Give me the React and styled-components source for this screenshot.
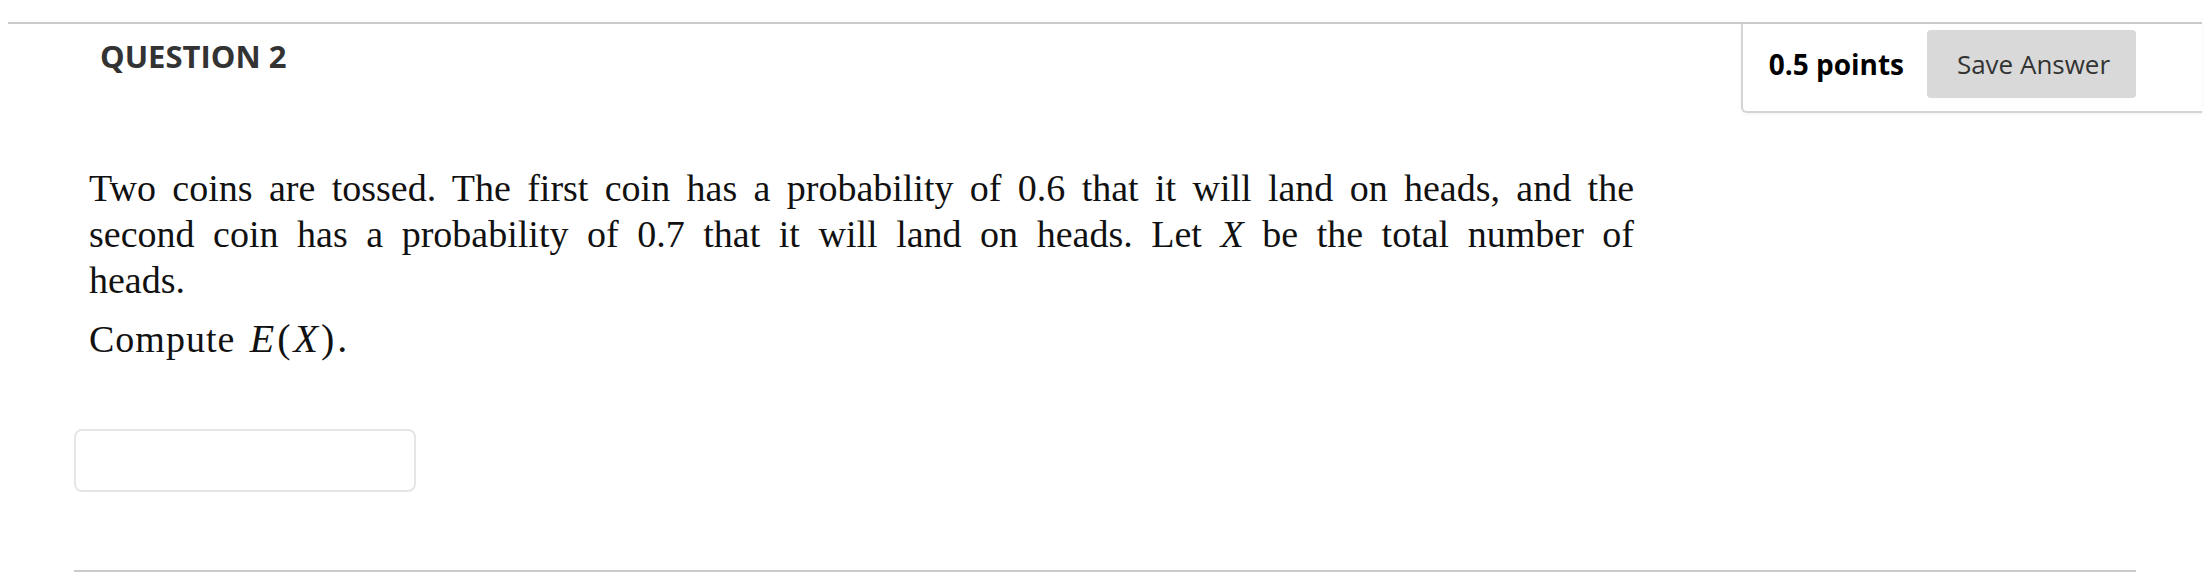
import React from "react";
import styled, { createGlobalStyle } from "styled-components";

const GlobalStyle = createGlobalStyle`
  html, body {
    margin: 0;
    padding: 0;
    background: #fff;
  }
  body {
    font-family: "Open Sans", "Liberation Sans", sans-serif;
  }
`;

const Page = styled.div`
  padding: 22px 8px 0;
`;

const QuestionBlock = styled.section`
  border-top: 2px solid #cbcbcb;
`;

const Header = styled.div`
  display: flex;
  justify-content: space-between;
  align-items: flex-start;
`;

const Heading = styled.h2`
  margin: 0;
  padding: 14px 0 0 92px;
  font-size: 31px;
  line-height: 1.2;
  font-weight: 700;
  color: #333;
`;

const PointsBox = styled.div`
  display: flex;
  align-items: center;
  gap: 23px;
  padding: 6px 66px 13px 26px;
  border-left: 2px solid #d4d4d4;
  border-bottom: 2px solid #d4d4d4;
  border-bottom-left-radius: 6px;
  box-shadow: 0 1px 3px rgba(0, 0, 0, 0.06);
`;

const Points = styled.span`
  font-size: 28px;
  font-weight: 700;
  color: #000;
  white-space: nowrap;
`;

const SaveButton = styled.button`
  width: 209px;
  height: 68px;
  padding: 0 0 0 4px;
  border: none;
  border-radius: 4px;
  background: #d9d9d9;
  color: #333;
  font-family: "Open Sans", "Liberation Sans", sans-serif;
  font-size: 26px;
  font-weight: 400;
  cursor: pointer;
`;

const Content = styled.div`
  padding: 0 66px;
`;

const Prompt = styled.div`
  margin: 52px 0 0 15px;
  width: 1545px;
  font-family: "Liberation Serif", "Times New Roman", serif;
  font-size: 38px;
  color: #111;
`;

const Line = styled.div`
  height: 46px;
  line-height: 46px;
  white-space: nowrap;
  text-align: ${(p) => (p.$justify ? "justify" : "left")};
  text-align-last: ${(p) => (p.$justify ? "justify" : "left")};
`;

const Para = styled.div`
  margin-top: ${(p) => p.$gap || 0}px;
`;

const Word = styled.span`
  letter-spacing: 1px;
`;

const Math = styled.span`
  margin-left: 5px;
  font-size: 40px;
  letter-spacing: 3px;
`;

const MathVar = styled.i`
  font-style: italic;
`;

const AnswerInput = styled.input`
  display: block;
  box-sizing: border-box;
  margin-top: 67px;
  width: 342px;
  height: 63px;
  border: 2px solid #e6e6e6;
  border-radius: 8px;
  background: #fff;
  font-size: 24px;
  outline: none;
`;

const Divider = styled.hr`
  margin: 78px 0 0;
  border: none;
  border-top: 2px solid #cbcbcb;
`;

const App = () => {
  return (
    <>
      <GlobalStyle />
      <Page>
        <QuestionBlock>
          <Header>
            <Heading>QUESTION 2</Heading>
            <PointsBox>
              <Points>0.5 points</Points>
              <SaveButton type="button">Save Answer</SaveButton>
            </PointsBox>
          </Header>
          <Content>
            <Prompt>
              <Para>
                <Line $justify>
                  Two coins are tossed. The first coin has a probability of 0.6
                  that it will land on heads, and the
                </Line>
                <Line $justify>
                  second coin has a probability of 0.7 that it will land on
                  heads. Let <MathVar>X</MathVar> be the total number of
                </Line>
                <Line>heads.</Line>
              </Para>
              <Para $gap={13}>
                <Line>
                  <Word>Compute</Word>{" "}
                  <Math>
                    <MathVar>E</MathVar>(<MathVar>X</MathVar>).
                  </Math>
                </Line>
              </Para>
            </Prompt>
            <AnswerInput type="text" aria-label="Answer" />
            <Divider />
          </Content>
        </QuestionBlock>
      </Page>
    </>
  );
};

export default App;
